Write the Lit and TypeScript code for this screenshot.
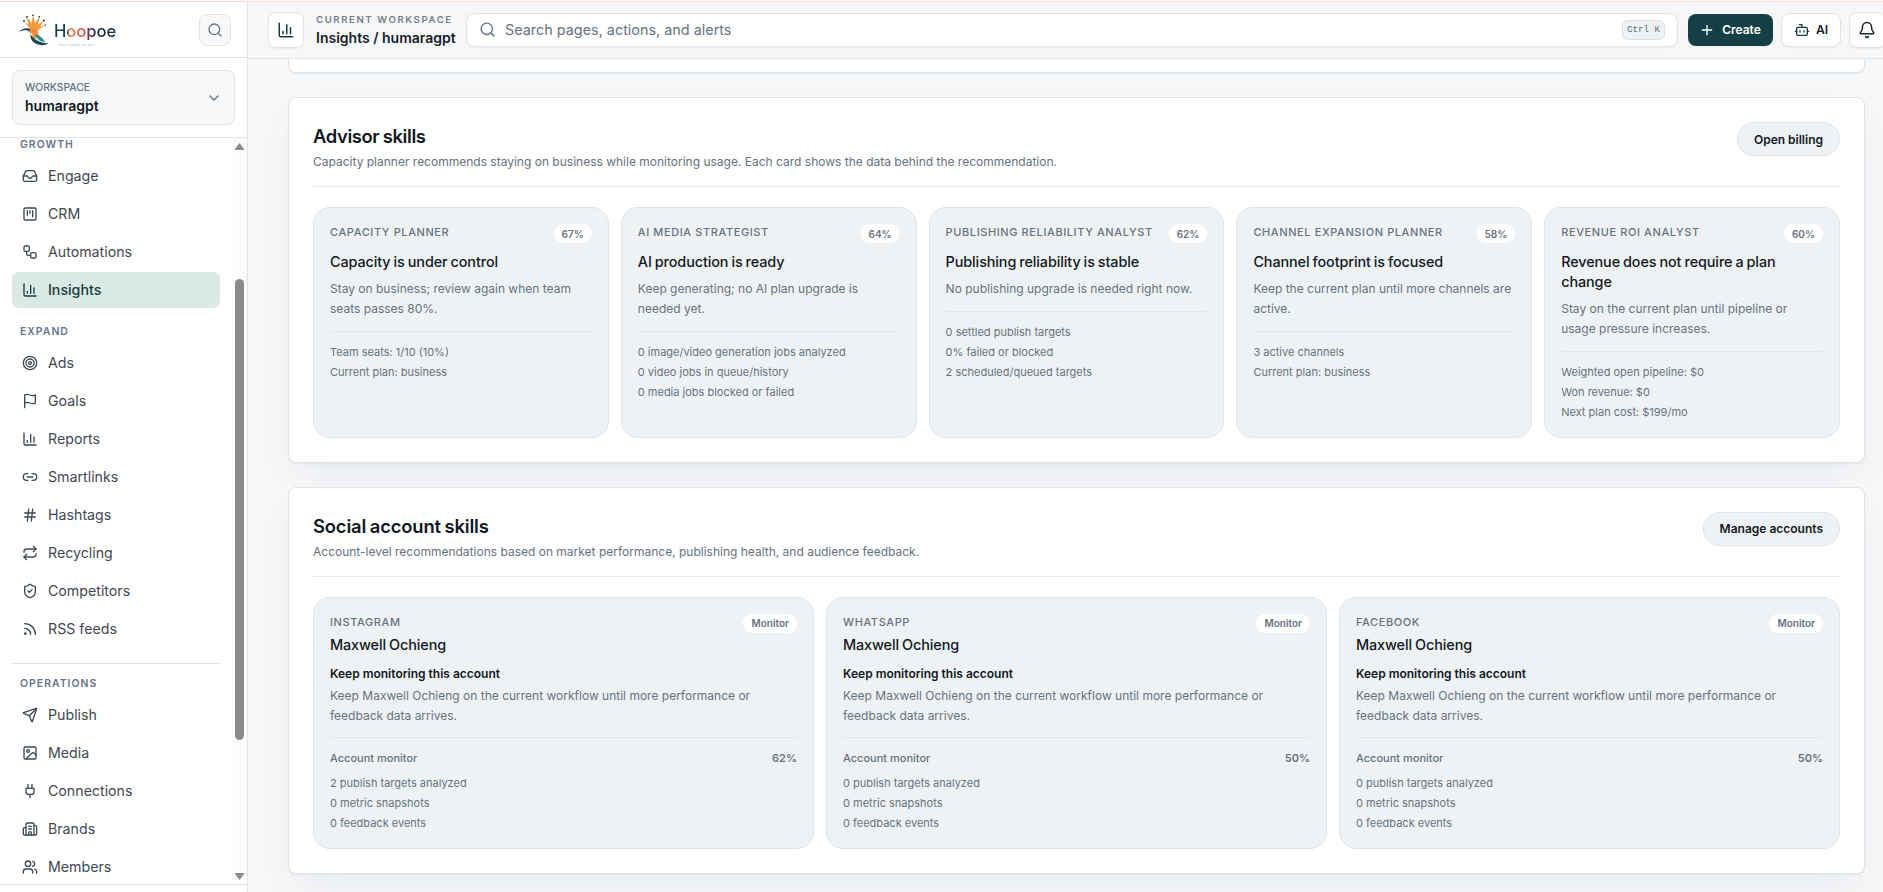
import { LitElement, html, css, svg, SVGTemplateResult } from "lit";
import { customElement, property } from "lit/decorators.js";
import { classMap } from "lit/directives/class-map.js";

const ICONS: Record<string, SVGTemplateResult> = {
  search: svg`<circle cx="11" cy="11" r="8"/><path d="m21 21-4.3-4.3"/>`,
  chevron: svg`<path d="m6 9 6 6 6-6"/>`,
  plus: svg`<path d="M5 12h14M12 5v14"/>`,
  inbox: svg`<path d="M22 12h-6l-2 3h-4l-2-3H2"/><path d="M5.45 5.11 2 12v6a2 2 0 0 0 2 2h16a2 2 0 0 0 2-2v-6l-3.45-6.89A2 2 0 0 0 16.76 4H7.24a2 2 0 0 0-1.79 1.11z"/>`,
  kanban: svg`<rect x="3" y="3" width="18" height="18" rx="2"/><path d="M8 7v7M12 7v4M16 7v9"/>`,
  workflow: svg`<rect x="3" y="3" width="8" height="8" rx="2"/><path d="M7 11v4a2 2 0 0 0 2 2h4"/><rect x="13" y="13" width="8" height="8" rx="2"/>`,
  chart: svg`<path d="M3 3v16a2 2 0 0 0 2 2h16M18 17V9M13 17V5M8 17v-3"/>`,
  target: svg`<circle cx="12" cy="12" r="10"/><circle cx="12" cy="12" r="6"/><circle cx="12" cy="12" r="2"/>`,
  flag: svg`<path d="M4 15s1-1 4-1 5 2 8 2 4-1 4-1V3s-1 1-4 1-5-2-8-2-4 1-4 1zM4 22v-7"/>`,
  link: svg`<path d="M9 17H7A5 5 0 0 1 7 7h2M15 7h2a5 5 0 1 1 0 10h-2M8 12h8"/>`,
  hash: svg`<path d="M4 9h16M4 15h16M10 3 8 21M16 3l-2 18"/>`,
  repeat: svg`<path d="m17 2 4 4-4 4"/><path d="M3 11v-1a4 4 0 0 1 4-4h14M7 22l-4-4 4-4"/><path d="M21 13v1a4 4 0 0 1-4 4H3"/>`,
  shield: svg`<path d="M20 13c0 5-3.5 7.5-7.66 8.95a1 1 0 0 1-.67-.01C7.5 20.5 4 18 4 13V6a1 1 0 0 1 1-1c2 0 4.5-1.2 6.24-2.72a1.17 1.17 0 0 1 1.52 0C14.51 3.81 17 5 19 5a1 1 0 0 1 1 1z"/><path d="m9 12 2 2 4-4"/>`,
  rss: svg`<path d="M4 11a9 9 0 0 1 9 9M4 4a16 16 0 0 1 16 16"/><circle cx="5" cy="19" r="1"/>`,
  send: svg`<path d="M14.536 21.686a.5.5 0 0 0 .937-.024l6.5-19a.496.496 0 0 0-.635-.635l-19 6.5a.5.5 0 0 0-.024.937l7.93 3.18a2 2 0 0 1 1.112 1.11z"/><path d="m21.854 2.147-10.94 10.939"/>`,
  image: svg`<rect x="3" y="3" width="18" height="18" rx="2"/><circle cx="9" cy="9" r="2"/><path d="m21 15-3.086-3.086a2 2 0 0 0-2.828 0L6 21"/>`,
  plug: svg`<path d="M12 22v-5M9 8V2M15 8V2M18 8v5a4 4 0 0 1-4 4h-4a4 4 0 0 1-4-4V8Z"/>`,
  building: svg`<path d="M10 12h4M10 8h4M14 21v-3a2 2 0 0 0-4 0v3"/><path d="M6 10H4a2 2 0 0 0-2 2v7a2 2 0 0 0 2 2h16a2 2 0 0 0 2-2V9a2 2 0 0 0-2-2h-2"/><path d="M6 21V5a2 2 0 0 1 2-2h8a2 2 0 0 1 2 2v16"/>`,
  users: svg`<path d="M16 21v-2a4 4 0 0 0-4-4H6a4 4 0 0 0-4 4v2"/><circle cx="9" cy="7" r="4"/><path d="M22 21v-2a4 4 0 0 0-3-3.87M16 3.13a4 4 0 0 1 0 7.75"/>`,
  bot: svg`<path d="M12 8V4H8"/><rect x="4" y="8" width="16" height="12" rx="2"/><path d="M2 14h2M20 14h2M15 13v2M9 13v2"/>`,
  bell: svg`<path d="M10.268 21a2 2 0 0 0 3.464 0"/><path d="M3.262 15.326A1 1 0 0 0 4 17h16a1 1 0 0 0 .74-1.673C19.41 13.956 18 12.499 18 8A6 6 0 0 0 6 8c0 4.499-1.411 5.956-2.738 7.326"/>`,
};

const icon = (name: string, size = 16) => html`<svg
  width=${size} height=${size} viewBox="0 0 24 24" fill="none" stroke="currentColor"
  stroke-width="2" stroke-linecap="round" stroke-linejoin="round">${ICONS[name]}</svg>`;

@customElement("hoopoe-sidebar")
class HoopoeSidebar extends LitElement {
  groups = [
    { label: "Growth", items: [["Engage", "inbox"], ["CRM", "kanban"], ["Automations", "workflow"], ["Insights", "chart"]] },
    { label: "Expand", items: [["Ads", "target"], ["Goals", "flag"], ["Reports", "chart"], ["Smartlinks", "link"], ["Hashtags", "hash"], ["Recycling", "repeat"], ["Competitors", "shield"], ["RSS feeds", "rss"]] },
    { label: "Operations", ruled: true, items: [["Publish", "send"], ["Media", "image"], ["Connections", "plug"], ["Brands", "building"], ["Members", "users"]] },
  ];

  static styles = css`
    :host { display: flex; flex-direction: column; box-sizing: border-box; width: 248px; background: #fff; border-right: 1px solid #dfe4e9; min-height: 0; }
    svg { display: block; flex: none; }
    .brand { display: flex; align-items: center; justify-content: space-between; height: 55px; padding: 0 16px 0 18px; border-bottom: 1px solid #dfe4e9; }
    .logo { display: flex; align-items: center; gap: 4px; }
    .words { display: flex; flex-direction: column; padding-top: 10px; }
    .name { font-size: 16.6px; line-height: 18px; font-weight: 500; letter-spacing: -0.05px; color: transparent; background: linear-gradient(90deg, #17414a 0 22%, #f0803c 24%, #e8584a 46%, #5c2a4a 58%, #3b2947 66%, #152c40 72%); background-clip: text; -webkit-background-clip: text; }
    .tag { font-size: 3px; line-height: 5px; padding-left: 5px; color: #b9bec4; margin-top: 3px; }
    .find { display: grid; place-items: center; width: 30px; height: 30px; border: 1px solid #dfe4e9; border-radius: 8px; background: #f6f8fa; color: #667380; }
    .pick { padding: 12px; border-bottom: 1px solid #dfe4e9; }
    .workspace { display: flex; align-items: center; justify-content: space-between; height: 53px; padding: 0 12px; border: 1px solid #dfe4e9; border-radius: 8px; background: #f6f8fa; color: #667380; }
    .caption { font-size: 10.3px; line-height: 14px; font-weight: 500; color: #64707e; }
    .current { margin: 3px 0 1px; font-size: 14px; line-height: 18px; font-weight: 600; color: #12181f; }
    .scroller { display: flex; flex: 1; min-height: 0; }
    nav { flex: 1; padding: 0 12px; overflow: hidden; }
    .label { padding: 1px 0 7px 8px; font-size: 10.4px; line-height: 12px; font-weight: 600; letter-spacing: 1.05px; text-transform: uppercase; color: #64748b; }
    .group + .group { padding-top: 17px; }
    .group + .group.ruled { margin-top: 16px; padding-top: 13px; border-top: 1px solid #dfe4e9; }
    .items { display: flex; flex-direction: column; gap: 2px; }
    .item { display: flex; align-items: center; gap: 10px; height: 36px; padding-left: 10px; border-radius: 7px; font-size: 14.2px; line-height: 18px; color: #3f4853; }
    .item.on { background: #dbe9e5; color: #143c42; font-weight: 500; }
    .bar { display: flex; flex-direction: column; align-items: center; justify-content: space-between; width: 15px; background: #fcfcfc; padding: 5px 0 4px; box-sizing: border-box; }
    .lane { flex: 1; display: flex; justify-content: center; padding-top: 129px; }
    .thumb { width: 9px; height: 461px; border-radius: 5px; background: #8b8b8b; }
    .foot { height: 7px; border-top: 1px solid #dfe4e9; flex: none; }
  `;

  render() {
    return html`
      <div class="brand">
        <div class="logo">
          <svg width="32" height="34" viewBox="0 0 32 34">
            <path d="M13 17 6.500 9l4.500 2.500L9.500 5l4.500 5L15 3l2 7 4-5.500-1 7 5.500-3.500-3.500 5.500 5-1.500-5 4-5 3z" fill="#f9a84a"/>
            <path d="M13 16 9.500 6M15 15V4M17 15l4-9.500M18 16l7-7.500" stroke="#f07f2c" stroke-width=".9"/>
            <path d="M10 16.500c5-2.500 9-1 10 2 .8 3-.5 6-3.500 8.500-2-2-2.500-3.500-2-6-1.500-1-3-1.500-4.500-2.500z" fill="#f28b34"/>
            <path d="M.8 18.800c3-3.300 6.500-4.300 10.700-3.300l1 2.300c-4-1-8-1-11.700 1z" fill="#234a5c"/>
            <path d="M12.500 21c2 4 6.500 7 11.500 8.500 2.500.7 4.500.8 6.500 1-4 2.500-9 2-12.500.3-4-2-6-5.500-5.500-9.800z" fill="#15474f"/>
            <path d="M17.500 21c4 1 7.500 4 9.500 8-5-.5-9-3.500-9.500-8z" fill="#2b8a84"/>
            <path d="M16 24.500c3.500 3 6.500 4.500 10.500 5" fill="none" stroke="#8fc7b6" stroke-width=".7"/>
            <g fill="#22313c"><circle cx="6" cy="8" r=".9"/><circle cx="9" cy="4" r=".9"/><circle cx="15" cy="2.300" r=".9"/><circle cx="21.300" cy="3.800" r=".9"/><circle cx="25.800" cy="7.500" r=".9"/><circle cx="27.300" cy="12" r=".8"/></g>
          </svg>
          <div class="words"><span class="name">Hoopoe</span><span class="tag">Every channel. One story.</span></div>
        </div>
        <div class="find">${icon("search")}</div>
      </div>
      <div class="pick">
        <div class="workspace">
          <div><div class="caption">WORKSPACE</div><div class="current">humaragpt</div></div>
          ${icon("chevron")}
        </div>
      </div>
      <div class="scroller">
        <nav>
          ${this.groups.map((g) => html`
            <div class=${classMap({ group: true, ruled: !!g.ruled })}>
              <div class="label">${g.label}</div>
              <div class="items">
                ${g.items.map(([name, glyph]) => html`
                  <div class=${classMap({ item: true, on: name === "Insights" })}>${icon(glyph)}<span>${name}</span></div>`)}
              </div>
            </div>`)}
        </nav>
        <div class="bar">
          <svg width="9" height="7" viewBox="0 0 9 7"><path d="M4.500 0 9 6v1H0V6z" fill="#8b8b8b"/></svg>
          <div class="lane"><div class="thumb"></div></div>
          <svg width="9" height="7" viewBox="0 0 9 7"><path d="M4.500 7 9 1V0H0v1z" fill="#8b8b8b"/></svg>
        </div>
      </div>
      <div class="foot"></div>`;
  }
}

@customElement("hoopoe-topbar")
class HoopoeTopbar extends LitElement {
  static styles = css`
    :host { display: flex; align-items: center; box-sizing: border-box; height: 57px; padding: 0 0 1px 20px; border-bottom: 1px solid #dfe4e9; background: #f5f7f9; overflow: hidden; }
    svg { display: block; flex: none; }
    .box { display: flex; align-items: center; justify-content: center; box-sizing: border-box; flex: none; border: 1px solid #dfe4e9; border-radius: 8px; background: #fff; box-shadow: 0 1px 2px rgba(15, 30, 45, 0.05); }
    .mark { width: 36px; height: 36px; color: #143f45; }
    .place { width: 150px; flex: none; padding-left: 12px; box-sizing: border-box; white-space: nowrap; }
    .over { font-size: 9.6px; line-height: 14px; font-weight: 600; letter-spacing: 1.6px; color: #74808d; }
    .here { margin-top: 1px; font-size: 14px; line-height: 19px; font-weight: 600; color: #182028; }
    .search { flex: 1; justify-content: flex-start; height: 34px; margin-left: 12px; padding: 0 12px; gap: 9px; color: #667380; font-size: 14.4px; }
    .hint { flex: 1; }
    .key { display: grid; place-items: center; box-sizing: border-box; width: 43px; height: 20px; border: 1px solid #dbe1e7; border-radius: 6px; background: #eef2f5; font: 9.2px "Liberation Mono", monospace; color: #5f6d7b; }
    .create { width: 85px; height: 32px; margin-left: 10px; padding-right: 1px; gap: 7px; border: 0; background: #143f45; color: #fff; font-size: 12px; font-weight: 600; }
    .ai { width: 60px; height: 34px; margin-left: 8px; gap: 6px; font-size: 12.2px; font-weight: 600; color: #182028; }
    .ai svg { color: #143f45; }
    .bell { width: 36px; height: 36px; margin: 0 -2px 0 8px; color: #182028; }
  `;

  render() {
    return html`
      <div class="box mark">${icon("chart", 18)}</div>
      <div class="place"><div class="over">CURRENT WORKSPACE</div><div class="here">Insights / humaragpt</div></div>
      <div class="box search">${icon("search", 17)}<span class="hint">Search pages, actions, and alerts</span><span class="key">Ctrl K</span></div>
      <div class="box create">${icon("plus")}<span>Create</span></div>
      <div class="box ai">${icon("bot")}<span>AI</span></div>
      <div class="box bell">${icon("bell", 18)}</div>`;
  }
}

@customElement("skill-panel")
class SkillPanel extends LitElement {
  @property() heading = "";
  @property() note = "";
  @property() action = "";

  static styles = css`
    :host { display: block; padding: 24px; border: 1px solid #dfe4e9; border-radius: 8px; background: #fff; box-shadow: 0 1px 2px rgba(15, 30, 45, 0.05), 0 18px 40px -8px rgba(15, 30, 45, 0.06); }
    .head { display: flex; align-items: flex-start; justify-content: space-between; box-sizing: border-box; height: 65px; border-bottom: 1px solid #e6eaee; }
    .title { margin: 1px 0 0; font-size: 18.4px; line-height: 26px; font-weight: 600; letter-spacing: var(--heading-tracking, -0.38px); word-spacing: -0.8px; color: #12181f; }
    .note { margin-top: 3px; font-size: 12px; line-height: 20px; color: #66727f; }
    .action { display: flex; align-items: center; box-sizing: border-box; height: 34px; padding: 0 16px; border: 1px solid #dfe4e9; border-radius: 17px; background: #eef2f5; font-size: 12px; font-weight: 600; color: #12181f; }
    .body { padding-top: 20px; }
  `;

  render() {
    return html`
      <div class="head">
        <div><h2 class="title">${this.heading}</h2><div class="note">${this.note}</div></div>
        <div class="action">${this.action}</div>
      </div>
      <div class="body"><slot></slot></div>`;
  }
}

const cardStyles = css`
  :host { display: block; box-sizing: border-box; padding: 16px; border: 1px solid #dfe4e9; border-radius: 17px; background: #eef2f5; color: #66727f; }
  .top { display: flex; justify-content: space-between; align-items: flex-start; height: 19px; white-space: nowrap; }
  .kind { font-size: 11px; line-height: 17px; font-weight: 500; letter-spacing: 0.6px; text-transform: uppercase; }
  .pill { display: flex; align-items: center; height: 19px; padding: 0 8px; border-radius: 10px; background: #fff; font-size: 10px; font-weight: 600; }
  .title { font-size: 14.4px; line-height: 20px; font-weight: 500; letter-spacing: -0.1px; word-spacing: -0.7px; color: #12181f; }
  .text { font-size: 12px; line-height: 19.8px; }
  .facts { display: flex; flex-direction: column; gap: 3.4px; font-size: 11px; line-height: 17px; }
`;

@customElement("advisor-card")
class AdvisorCard extends LitElement {
  @property({ attribute: false }) data: any;
  static styles = [cardStyles, css`
    .title { margin-top: 9px; }
    .text { margin-top: 7px; }
    .facts { margin-top: 12px; padding-top: 12px; gap: 3.2px; border-top: 1px solid #e1e6ea; }
  `];
  render() {
    const d = this.data;
    return html`
      <div class="top"><span class="kind">${d.kind}</span><span class="pill">${d.score}</span></div>
      <div class="title">${d.title}</div>
      <div class="text">${d.text}</div>
      <div class="facts">${d.facts.map((f: string) => html`<span>${f}</span>`)}</div>`;
  }
}

@customElement("account-card")
class AccountCard extends LitElement {
  @property({ attribute: false }) data: any;
  static styles = [cardStyles, css`
    .title { margin-top: 2px; }
    .lead { margin-top: 10px; font-size: 12px; line-height: 18px; font-weight: 600; color: #12181f; }
    .text { margin-top: 3px; }
    .monitor { display: flex; justify-content: space-between; margin-top: 11.400px; padding-top: 12px; border-top: 1px solid #e1e6ea; font-size: 11px; line-height: 17px; font-weight: 500; }
    .score { font-weight: 600; }
    .facts { margin-top: 7.600px; }
  `];
  render() {
    const d = this.data;
    return html`
      <div class="top"><span class="kind">${d.network}</span><span class="pill">Monitor</span></div>
      <div class="title">Maxwell Ochieng</div>
      <div class="lead">Keep monitoring this account</div>
      <div class="text">Keep Maxwell Ochieng on the current workflow until more performance or feedback data arrives.</div>
      <div class="monitor"><span>Account monitor</span><span class="score">${d.score}</span></div>
      <div class="facts"><span>${d.targets} publish targets analyzed</span><span>0 metric snapshots</span><span>0 feedback events</span></div>`;
  }
}

@customElement("app-root")
class AppRoot extends LitElement {
  advisors = [
    { kind: "Capacity planner", score: "67%", title: "Capacity is under control", text: "Stay on business; review again when team seats passes 80%.", facts: ["Team seats: 1/10 (10%)", "Current plan: business"] },
    { kind: "AI media strategist", score: "64%", title: "AI production is ready", text: "Keep generating; no AI plan upgrade is needed yet.", facts: ["0 image/video generation jobs analyzed", "0 video jobs in queue/history", "0 media jobs blocked or failed"] },
    { kind: "Publishing reliability analyst", score: "62%", title: "Publishing reliability is stable", text: "No publishing upgrade is needed right now.", facts: ["0 settled publish targets", "0% failed or blocked", "2 scheduled/queued targets"] },
    { kind: "Channel expansion planner", score: "58%", title: "Channel footprint is focused", text: "Keep the current plan until more channels are active.", facts: ["3 active channels", "Current plan: business"] },
    { kind: "Revenue ROI analyst", score: "60%", title: "Revenue does not require a plan change", text: "Stay on the current plan until pipeline or usage pressure increases.", facts: ["Weighted open pipeline: $0", "Won revenue: $0", "Next plan cost: $199/mo"] },
  ];
  accounts = [
    { network: "Instagram", score: "62%", targets: 2 },
    { network: "WhatsApp", score: "50%", targets: 0 },
    { network: "Facebook", score: "50%", targets: 0 },
  ];

  static styles = css`
    :host { display: flex; flex-direction: column; height: 892px; overflow: hidden; font-family: Inter, sans-serif; background: #f5f7f9; }
    .strip { flex: none; height: 1px; background: #fdf8f6; border-bottom: 1px solid #fbdcd6; }
    .frame { display: flex; flex: 1; min-height: 0; }
    .main { display: flex; flex-direction: column; flex: 1; min-width: 0; }
    .content { flex: 1; display: flex; flex-direction: column; gap: 24px; min-height: 0; overflow: hidden; padding: 0 18px 0 40px; }
    .previous { flex: none; height: 13px; border: 1px solid #dfe4e9; border-top: 0; border-radius: 0 0 8px 8px; background: #fff; box-shadow: 0 1px 2px rgba(15, 30, 45, 0.05), 0 18px 40px -8px rgba(15, 30, 45, 0.06); }
    .advisors { display: grid; grid-template-columns: repeat(5, minmax(0, 1fr)); gap: 12px; }
    .accounts { display: grid; grid-template-columns: repeat(3, minmax(0, 1fr)); gap: 12px; }
    skill-panel { flex: none; }
    .social { --heading-tracking: -0.16px; }
  `;

  render() {
    return html`
      <div class="strip"></div>
      <div class="frame">
        <hoopoe-sidebar></hoopoe-sidebar>
        <div class="main">
          <hoopoe-topbar></hoopoe-topbar>
          <div class="content">
            <div class="previous"></div>
            <skill-panel heading="Advisor skills" note="Capacity planner recommends staying on business while monitoring usage. Each card shows the data behind the recommendation." action="Open billing">
              <div class="advisors">${this.advisors.map((d) => html`<advisor-card .data=${d}></advisor-card>`)}</div>
            </skill-panel>
            <skill-panel class="social" heading="Social account skills" note="Account-level recommendations based on market performance, publishing health, and audience feedback." action="Manage accounts">
              <div class="accounts">${this.accounts.map((d) => html`<account-card .data=${d}></account-card>`)}</div>
            </skill-panel>
          </div>
        </div>
      </div>`;
  }
}
